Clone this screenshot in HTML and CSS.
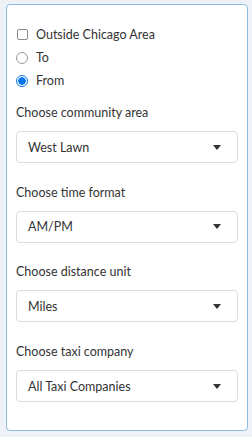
FILE: index.html
```html
<!DOCTYPE html>
<html lang="en">
  <head>
    <meta charset="UTF-8" />
    <meta name="viewport" content="width=device-width, initial-scale=1.0" />
    <title>Taxi filters</title>
    <link rel="stylesheet" href="styles.css">
  </head>
  <body>
    <div class="panel">
      <div class="options">
        <label class="option">
          <input type="checkbox" class="check" />
          <span>Outside Chicago Area</span>
        </label>
        <label class="option">
          <input type="radio" class="radio" name="dir" />
          <span>To</span>
        </label>
        <label class="option">
          <input type="radio" class="radio" name="dir" checked />
          <span>From</span>
        </label>
      </div>

      <div class="field">
        <div class="field-label">Choose community area</div>
        <div class="select"><span>West Lawn</span><i class="caret"></i></div>
      </div>

      <div class="field">
        <div class="field-label">Choose time format</div>
        <div class="select"><span>AM/PM</span><i class="caret"></i></div>
      </div>

      <div class="field">
        <div class="field-label">Choose distance unit</div>
        <div class="select"><span>Miles</span><i class="caret"></i></div>
      </div>

      <div class="field">
        <div class="field-label">Choose taxi company</div>
        <div class="select"><span>All Taxi Companies</span><i class="caret"></i></div>
      </div>
    </div>
  </body>
</html>
```

FILE: styles.css
```css
:root {
  --bg-color: #eef1f5;
  --text: #333333;
  --panel-border: #8dbce0;
  --select-border: #dcdcdc;
  --accent: #0b75f0;
}
* {
  box-sizing: border-box;
  margin: 0;
  padding: 0;
}
body {
  font-family: Lato, "Liberation Sans", sans-serif;
  font-size: 12.5px;
  color: var(--text);
  background: var(--bg-color);
  padding: 4px 4px 0 6px;
}
.panel {
  background: #fff;
  border: 1px solid var(--panel-border);
  border-radius: 4px;
  height: 427px;
  padding: 18px 9px 0 9px;
}
.options {
  display: flex;
  flex-direction: column;
  margin-bottom: 11px;
}
.option {
  display: flex;
  align-items: center;
  height: 23px;
  gap: 8px;
}
.check,
.radio {
  appearance: none;
  flex: none;
  width: 11px;
  height: 11px;
  margin-left: 1px;
  border: 1px solid #8a8a8a;
  background: #fff;
}
.check {
  border-radius: 2px;
}
.radio {
  width: 12px;
  height: 12px;
  margin-left: 0;
  border-color: #9a9a9a;
  border-radius: 50%;
}
.radio:checked {
  border: 1px solid var(--accent);
  background: radial-gradient(circle, var(--accent) 0 3.5px, #fff 4px);
}
.field {
  display: flex;
  flex-direction: column;
  margin-bottom: 19.7px;
}
.field-label {
  line-height: 20px;
  margin-bottom: 8px;
}
.select {
  display: flex;
  align-items: center;
  justify-content: space-between;
  width: 222px;
  height: 32px;
  padding: 0 16px 0 11px;
  border: 1px solid var(--select-border);
  border-radius: 4px;
}
.caret {
  width: 0;
  height: 0;
  border-left: 4.5px solid transparent;
  border-right: 4.5px solid transparent;
  border-top: 5px solid #333;
}
```
